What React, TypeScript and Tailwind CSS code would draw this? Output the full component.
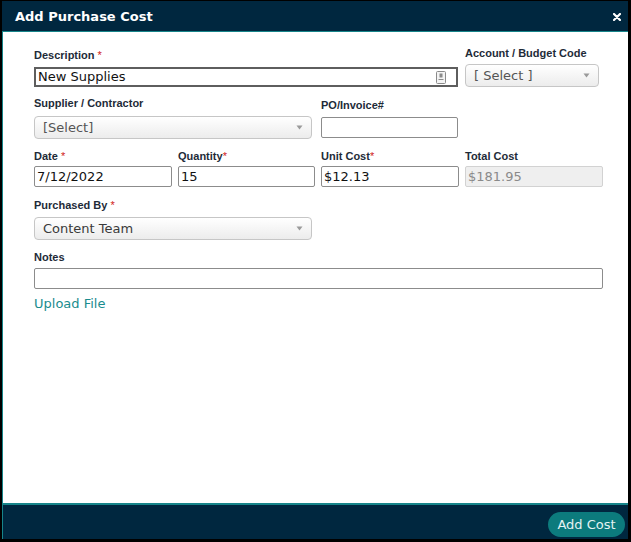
import React from "react";

const Label = ({ text, req, tight, className = "" }: { text: string; req?: boolean; tight?: boolean; className?: string }) => (
  <div className={`text-[11px] leading-[13px] font-bold text-[#1e2b38] whitespace-nowrap ${className}`} style={{ fontFamily: '"Liberation Sans", Arial, sans-serif' }}>
    {text}
    {req && <span className="text-[#d01818] font-normal">{tight ? "*" : " *"}</span>}
  </div>
);

const Arrow = () => (
  <svg width="7" height="5" viewBox="0 0 7 5" className="shrink-0">
    <path d="M0.5 0.5 L6.5 0.5 L3.5 4.5 Z" fill="#9a9a9a" />
  </svg>
);

const Select = ({ text, w, color = "#555" }: { text: string; w: string; color?: string }) => (
  <div className={`${w} h-[23px] rounded-[4px] border border-[#c6c6c6] bg-gradient-to-b from-white to-[#ececec] flex items-center justify-between pl-[8px] pr-[8px] text-[13px]`} style={{ fontFamily: '"DejaVu Sans", Verdana, sans-serif', color }}>
    <span>{text}</span>
    <Arrow />
  </div>
);

const Input = ({ value, w, disabled }: { value?: string; w: string; disabled?: boolean }) => (
  <div className={`${w} h-[21px] rounded-[2px] border ${disabled ? "border-[#d2d2d2] bg-[#efefef] text-[#8a8a8a]" : "border-[#8c8c8c] bg-white text-[#111]"} flex items-center pl-[2px] text-[13px]`} style={{ fontFamily: '"DejaVu Sans", Verdana, sans-serif' }}>
    {value}
  </div>
);

export default function App() {
  return (
    <div className="w-[631px] h-[542px] bg-black pt-px pl-[2px] pr-[3px] pb-[3px]">
      <div className="h-full flex flex-col bg-white">
        <div className="h-[31px] shrink-0 bg-[#00273f] border-b border-[#16858a] flex items-center justify-between pl-[13px] pr-[7px]">
          <span className="text-white font-bold text-[13px] leading-none" style={{ fontFamily: '"DejaVu Sans", Verdana, sans-serif' }}>Add Purchase Cost</span>
          <svg width="8" height="8" viewBox="0 0 8 8" className="mt-[1px]">
            <path d="M1 1 L7 7 M7 1 L1 7" stroke="white" strokeWidth="2.2" strokeLinecap="round" />
          </svg>
        </div>
        <div className="flex-1 border-l border-[#16858a] pl-[31px] pt-[15px]">
          {/* Row 1 */}
          <div className="flex gap-[7px] items-start">
            <div className="mt-[2px]">
              <Label text="Description" req className="mb-[5px]" />
              <div className="w-[424px] h-[20px] border-2 border-[#5e5e5e] flex items-center justify-between pl-[2px] pr-[10px] text-[13px] text-[#111]" style={{ fontFamily: '"DejaVu Sans", Verdana, sans-serif' }}>
                <span>New Supplies</span>
                <svg width="10" height="13" viewBox="0 0 10 13">
                  <rect x="0.5" y="0.5" width="9" height="12" rx="1" fill="#f3f3f3" stroke="#8a8a8a" />
                  <rect x="3.5" y="2.5" width="3" height="4" fill="#8a8a8a" />
                  <path d="M2.5 8.5 H7.5" stroke="#8a8a8a" />
                </svg>
              </div>
            </div>
            <div>
              <Label text="Account / Budget Code" className="mb-[4px]" />
              <Select text="[ Select ]" w="w-[134px]" />
            </div>
          </div>
          {/* Row 2 */}
          <div className="flex gap-[9px] items-start">
            <div className="mt-[10px]">
              <Label text="Supplier / Contractor" className="mb-[6px]" />
              <Select text="[Select]" w="w-[278px]" />
            </div>
            <div className="mt-[12px]">
              <Label text="PO/Invoice#" className="mb-[5px]" />
              <Input w="w-[137px]" />
            </div>
          </div>
          {/* Row 3 */}
          <div className="flex items-start mt-[11px]">
            <div className="w-[144px]">
              <Label text="Date" req className="mb-[3px]" />
              <Input value="7/12/2022" w="w-[138px]" />
            </div>
            <div className="w-[143px]">
              <Label text="Quantity" req tight className="mb-[3px]" />
              <Input value="15" w="w-[137px]" />
            </div>
            <div className="w-[144px]">
              <Label text="Unit Cost" req tight className="mb-[3px]" />
              <Input value="$12.13" w="w-[138px]" />
            </div>
            <div>
              <Label text="Total Cost" className="mb-[3px]" />
              <Input value="$181.95" w="w-[138px]" disabled />
            </div>
          </div>
          {/* Row 4 */}
          <div className="mt-[12px]">
            <Label text="Purchased By" req className="mb-[5px]" />
            <Select text="Content Team" w="w-[278px]" color="#3a3a3a" />
          </div>
          {/* Notes */}
          <div className="mt-[11px]">
            <Label text="Notes" className="mb-[4px]" />
            <Input w="w-[569px]" />
          </div>
          <div className="mt-[7px] text-[13px] leading-[16px] text-[#1a8c8e]" style={{ fontFamily: '"DejaVu Sans", Verdana, sans-serif' }}>Upload File</div>
        </div>
        <div className="h-[36px] shrink-0 bg-[#00273f] border-t-2 border-l border-[#16858a] flex items-end justify-end pr-[3px] pb-[2px]">
          <div className="h-[25px] w-[77px] rounded-full bg-[#0c7b7d] text-[#e4f3f3] text-[13px] flex items-center justify-center" style={{ fontFamily: '"DejaVu Sans", Verdana, sans-serif' }}>Add Cost</div>
        </div>
      </div>
    </div>
  );
}
